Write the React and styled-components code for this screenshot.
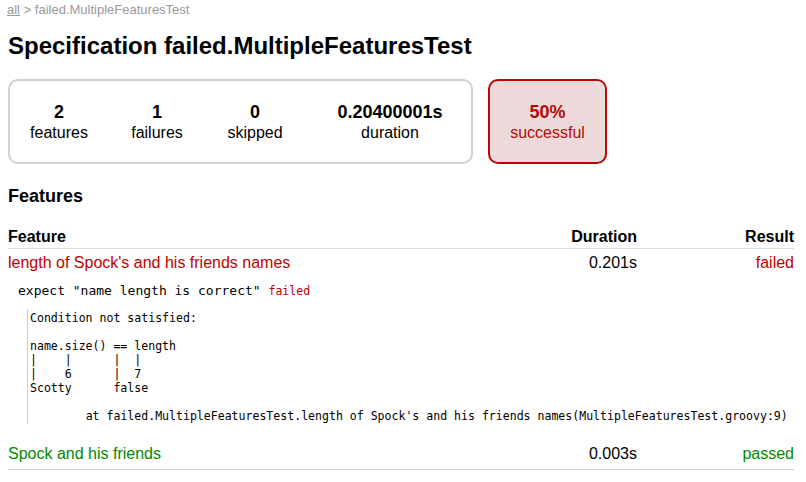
import React from "react";
import { styled, createGlobalStyle } from "styled-components";

const GlobalStyle = createGlobalStyle`
  body {
    margin: 0;
    background: #fff;
    font-family: "Liberation Sans", Arial, sans-serif;
    color: #000;
  }
`;

const Page = styled.div`
  padding: 2px 12px 0 8px;
`;

const Breadcrumbs = styled.div`
  font-size: 13px;
  line-height: 15px;
  color: #999;
  margin-left: -1px;
`;

const CrumbLink = styled.a`
  color: #999;
  text-decoration: underline;
`;

const Title = styled.h1`
  margin: 15px 0 0;
  font-size: 24px;
  line-height: 28px;
  font-weight: bold;
`;

const SummaryRow = styled.div`
  display: flex;
  gap: 15px;
  margin-top: 19px;
`;

const SummaryBox = styled.div`
  box-sizing: border-box;
  width: 465px;
  display: flex;
  border: 2px solid #d0d0d0;
  border-radius: 10px;
`;

const InfoBox = styled.div`
  box-sizing: border-box;
  width: ${(p) => (p.$width ? `${p.$width}px` : "auto")};
  flex: ${(p) => (p.$width ? "none" : "1")};
  padding: 20px 0 19px ${(p) => (p.$width ? 0 : 5)}px;
  text-align: center;
`;

const SuccessBox = styled(InfoBox)`
  width: 119px;
  flex: none;
  padding-left: 0;
  border: 2px solid #b60808;
  border-radius: 10px;
  background: #ecdada;
  color: #b60808;
`;

const Counter = styled.div`
  font-size: 18px;
  line-height: 22px;
  font-weight: bold;
`;

const Label = styled.div`
  font-size: 16px;
  line-height: 20px;
`;

const SectionTitle = styled.h2`
  margin: 21px 0 0;
  font-size: 18px;
  line-height: 22px;
  font-weight: bold;
`;

const Table = styled.div`
  margin-top: 20px;
  font-size: 16px;
`;

const Row = styled.div`
  display: grid;
  grid-template-columns: 1fr 160px 157px;
  line-height: 20px;
  padding: ${(p) => (p.$head ? "0 0 1px" : p.$last ? "0 0 5px" : "4px 0 0")};
  margin-top: ${(p) => (p.$last ? "20px" : "0")};
  font-weight: ${(p) => (p.$head ? "bold" : "normal")};
  border-bottom: ${(p) =>
    p.$head ? "1px solid #ddd" : p.$last ? "1px solid #ccc" : "none"};
`;

const Cell = styled.div`
  text-align: ${(p) => (p.$right ? "right" : "left")};
  color: ${(p) => p.$color || "#000"};
`;

const Block = styled.div`
  margin: 10px 0 0 10px;
  font-family: "DejaVu Sans Mono", monospace;
  font-size: 13px;
  line-height: 16px;
  color: #000;
`;

const Status = styled.span`
  font-size: 11.55px;
  color: #c00000;
`;

const Trace = styled.pre`
  margin: 10px 0 0 19px;
  padding: 2px 0 1px 2px;
  border-left: 1px solid #ccc;
  font-family: "DejaVu Sans Mono", monospace;
  font-size: 11.55px;
  line-height: 14px;
  tab-size: 8;
  color: #000;
  white-space: pre;
`;

const RED = "#c00000";
const GREEN = "#008800";

const trace = `Condition not satisfied:

name.size() == length
|    |      |  |
|    6      |  7
Scotty      false

\tat failed.MultipleFeaturesTest.length of Spock's and his friends names(MultipleFeaturesTest.groovy:9)`;

const stats = [
  { value: "2", label: "features", width: 98 },
  { value: "1", label: "failures", width: 98 },
  { value: "0", label: "skipped", width: 98 },
  { value: "0.20400001s", label: "duration" },
];

const App = () => {
  return (
    <>
      <GlobalStyle />
      <Page>
        <Breadcrumbs>
          <CrumbLink href="#">all</CrumbLink> &gt; failed.MultipleFeaturesTest
        </Breadcrumbs>
        <Title>Specification failed.MultipleFeaturesTest</Title>

        <SummaryRow>
          <SummaryBox>
            {stats.map((s) => (
              <InfoBox key={s.label} $width={s.width}>
                <Counter>{s.value}</Counter>
                <Label>{s.label}</Label>
              </InfoBox>
            ))}
          </SummaryBox>
          <SuccessBox>
            <Counter>50%</Counter>
            <Label>successful</Label>
          </SuccessBox>
        </SummaryRow>

        <SectionTitle>Features</SectionTitle>
        <Table>
          <Row $head>
            <Cell>Feature</Cell>
            <Cell $right>Duration</Cell>
            <Cell $right>Result</Cell>
          </Row>
          <Row>
            <Cell $color={RED}>length of Spock's and his friends names</Cell>
            <Cell $right>0.201s</Cell>
            <Cell $right $color={RED}>failed</Cell>
          </Row>
          {/* failed block details */}
          <Block>
            expect "name length is correct" <Status>failed</Status>
          </Block>
          <Trace>{trace}</Trace>
          <Row $last>
            <Cell $color={GREEN}>Spock and his friends</Cell>
            <Cell $right>0.003s</Cell>
            <Cell $right $color={GREEN}>passed</Cell>
          </Row>
        </Table>
      </Page>
    </>
  );
};

export default App;
